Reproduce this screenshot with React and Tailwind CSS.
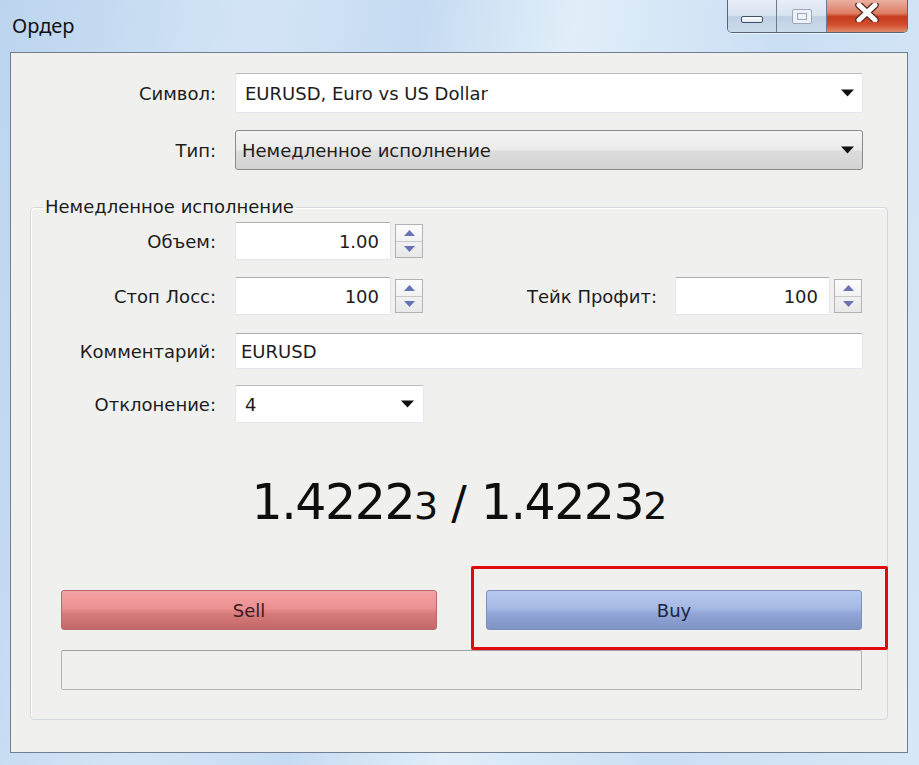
import React from "react";

function Caret() {
  return (
    <svg width="13" height="8" viewBox="0 0 13 8">
      <path d="M0 0.5h13L6.5 7.5z" fill="#111" />
    </svg>
  );
}

function Spinner() {
  return (
    <div className="ml-[4px] flex h-[34px] w-[28px] flex-col border border-[#b3b3b3] bg-[linear-gradient(#fcfcfc,#e8e8e8)]">
      <div className="flex flex-1 items-center justify-center border-b border-[#c9c9c9]">
        <svg width="11" height="6" viewBox="0 0 11 6">
          <path d="M0 6h11L5.5 0z" fill="#6a72b6" />
        </svg>
      </div>
      <div className="flex flex-1 items-center justify-center">
        <svg width="11" height="6" viewBox="0 0 11 6">
          <path d="M0 0h11L5.5 6z" fill="#6a72b6" />
        </svg>
      </div>
    </div>
  );
}

function NumInput({ value, w }) {
  return (
    <div
      className={`flex h-[38px] ${w} items-center justify-end rounded-[2px] border border-[#e3e6ea] border-t-[#abadb3] bg-white pr-[11px]`}
    >
      {value}
    </div>
  );
}

export default function App() {
  return (
    <div className="flex h-[765px] w-[919px] flex-col overflow-hidden bg-[linear-gradient(100deg,#bcd4ee_0%,#d3e4f6_25%,#c6dbf2_40%,#e1eef9_55%,#cadef4_75%,#d9e8f7_100%)] font-['DejaVu_Sans',sans-serif] text-[18px] text-[#1c1c1c]">
      {/* Title bar */}
      <div className="flex h-[52px] items-start justify-between">
        <div className="pl-[12px] pt-[11px] font-['Noto_Sans',sans-serif] text-[20px] leading-[30px] text-[#111]">
          Ордер
        </div>
        <div className="mr-[11px] flex h-[33px] overflow-hidden rounded-b-[5px] border border-t-0 border-[#55657c] shadow-[0_1px_0_#ffffff99]">
          <div className="flex w-[49px] items-end justify-center border-r border-[#6a7a90] bg-[linear-gradient(#e7eef7_0%,#d8e3f0_48%,#bfcfe2_52%,#cddcec_100%)] pb-[9px]">
            <div className="h-[7px] w-[22px] rounded-[2px] border border-[#3e4f68] bg-[linear-gradient(#ffffff,#dfe6ee)]" />
          </div>
          <div className="flex w-[50px] items-center justify-center border-r border-[#6a7a90] bg-[linear-gradient(#e7eef7_0%,#d8e3f0_48%,#bfcfe2_52%,#cddcec_100%)]">
            <div className="flex h-[15px] w-[20px] items-center justify-center rounded-[2px] border border-[#9aa8ba] bg-[#eef2f7]">
              <div className="h-[7px] w-[10px] border border-[#9aa8ba]" />
            </div>
          </div>
          <div className="flex w-[80px] items-start justify-center bg-[linear-gradient(#eab0a2_0%,#dc7c63_42%,#c63b1e_52%,#cf4b2b_75%,#e18a6b_100%)] pt-[3px]">
            <svg width="30" height="19" viewBox="0 0 30 19">
              <path d="M7 2 L23 17 M23 2 L7 17" stroke="#5a2a22" strokeWidth="7.5" strokeLinecap="round" />
              <path d="M7 2 L23 17 M23 2 L7 17" stroke="#ffffff" strokeWidth="5" strokeLinecap="round" />
            </svg>
          </div>
        </div>
      </div>

      {/* Client area */}
      <div className="ml-[10px] flex h-[701px] w-[898px] flex-col border border-[#6f7e90] bg-[#f0f0ef]">
        <div className="flex flex-col pt-[20px]">
          <div className="flex h-[40px] items-center">
            <div className="w-[205px] text-right">Символ:</div>
            <div className="ml-[19px] flex h-[40px] w-[628px] items-center justify-between rounded-[2px] border border-[#e3e6ea] border-t-[#b9bbc0] bg-white pl-[9px] pr-[8px]">
              <span>EURUSD, Euro vs US Dollar</span>
              <Caret />
            </div>
          </div>
          <div className="mt-[17px] flex h-[40px] items-center">
            <div className="w-[205px] text-right">Тип:</div>
            <div className="ml-[19px] flex h-[40px] w-[628px] items-center justify-between rounded-[3px] border border-[#8a8a8a] bg-[linear-gradient(#f4f4f4_0%,#ebebeb_50%,#dddddd_52%,#d3d3d3_100%)] pl-[6px] pr-[8px]">
              <span>Немедленное исполнение</span>
              <Caret />
            </div>
          </div>
        </div>

        <fieldset className="ml-[19px] mr-[19px] mt-[26px] rounded-[4px] border border-[#d3d8dc] p-0 shadow-[inset_1px_1px_0_#ffffff]">
          <legend className="ml-[12px] px-[2px] leading-[22px]">Немедленное исполнение</legend>
          <div className="flex flex-col pt-[4px]">
            <div className="flex h-[38px] items-center">
              <div className="w-[185px] text-right">Объем:</div>
              <div className="ml-[19px]">
                <NumInput value="1.00" w="w-[156px]" />
              </div>
              <Spinner />
            </div>
            <div className="mt-[17px] flex h-[38px] items-center pr-[25px]">
              <div className="w-[185px] text-right">Стоп Лосс:</div>
              <div className="ml-[19px]">
                <NumInput value="100" w="w-[156px]" />
              </div>
              <Spinner />
              <div className="flex-1 text-right">Тейк Профит:</div>
              <div className="ml-[18px]">
                <NumInput value="100" w="w-[155px]" />
              </div>
              <Spinner />
            </div>
            <div className="mt-[18px] flex h-[36px] items-center">
              <div className="w-[185px] text-right">Комментарий:</div>
              <div className="ml-[19px] flex h-[36px] w-[628px] items-center rounded-[2px] border border-[#e3e6ea] border-t-[#abadb3] bg-white pl-[5px]">
                EURUSD
              </div>
            </div>
            <div className="mt-[16px] flex h-[38px] items-center">
              <div className="w-[185px] text-right">Отклонение:</div>
              <div className="ml-[19px] flex h-[38px] w-[189px] items-center justify-between rounded-[2px] border border-[#e3e6ea] border-t-[#b9bbc0] bg-white pl-[9px] pr-[9px]">
                <span>4</span>
                <Caret />
              </div>
            </div>

            <div className="mt-[55px] flex h-[50px] items-center justify-center text-[#0e0e0e]">
              <span className="text-[49px] leading-[50px] tracking-[-1.5px]">1.4222</span>
              <span className="text-[38px] leading-[50px] tracking-[-1px] translate-y-[3px]">3</span>
              <span className="mx-[14px] text-[46px] leading-[50px]">/</span>
              <span className="text-[49px] leading-[50px] tracking-[-1.5px]">1.4223</span>
              <span className="text-[38px] leading-[50px] tracking-[-1px] translate-y-[3px]">2</span>
            </div>

            <div className="mt-[62px] flex pl-[30px] pr-[25px]">
              <div className="flex h-[40px] w-[376px] items-center justify-center rounded-[3px] border border-[#b86a6c] bg-[linear-gradient(#f4a2a4_0%,#ec9092_45%,#d67a7c_60%,#c46769_100%)] text-[#3a1c1e]">
                Sell
              </div>
              <div className="relative ml-[49px]">
                <div className="flex h-[40px] w-[376px] items-center justify-center rounded-[3px] border border-[#7d8fb8] bg-[linear-gradient(#b6c9ef_0%,#a5b9e4_45%,#91a6d6_60%,#7f93c4_100%)] text-[#1c2440]">
                  Buy
                </div>
                <div className="pointer-events-none absolute bottom-[-20px] left-[-15px] right-[-26px] top-[-24px] rounded-[2px] border-[3px] border-[#e20a0a]" />
              </div>
            </div>

            <div className="mb-[29px] ml-[30px] mr-[25px] mt-[20px] h-[40px] rounded-[2px] border border-[#b4b4b4] border-t-[#a0a0a0] bg-[#f0f0ef]" />
          </div>
        </fieldset>
      </div>
    </div>
  );
}
